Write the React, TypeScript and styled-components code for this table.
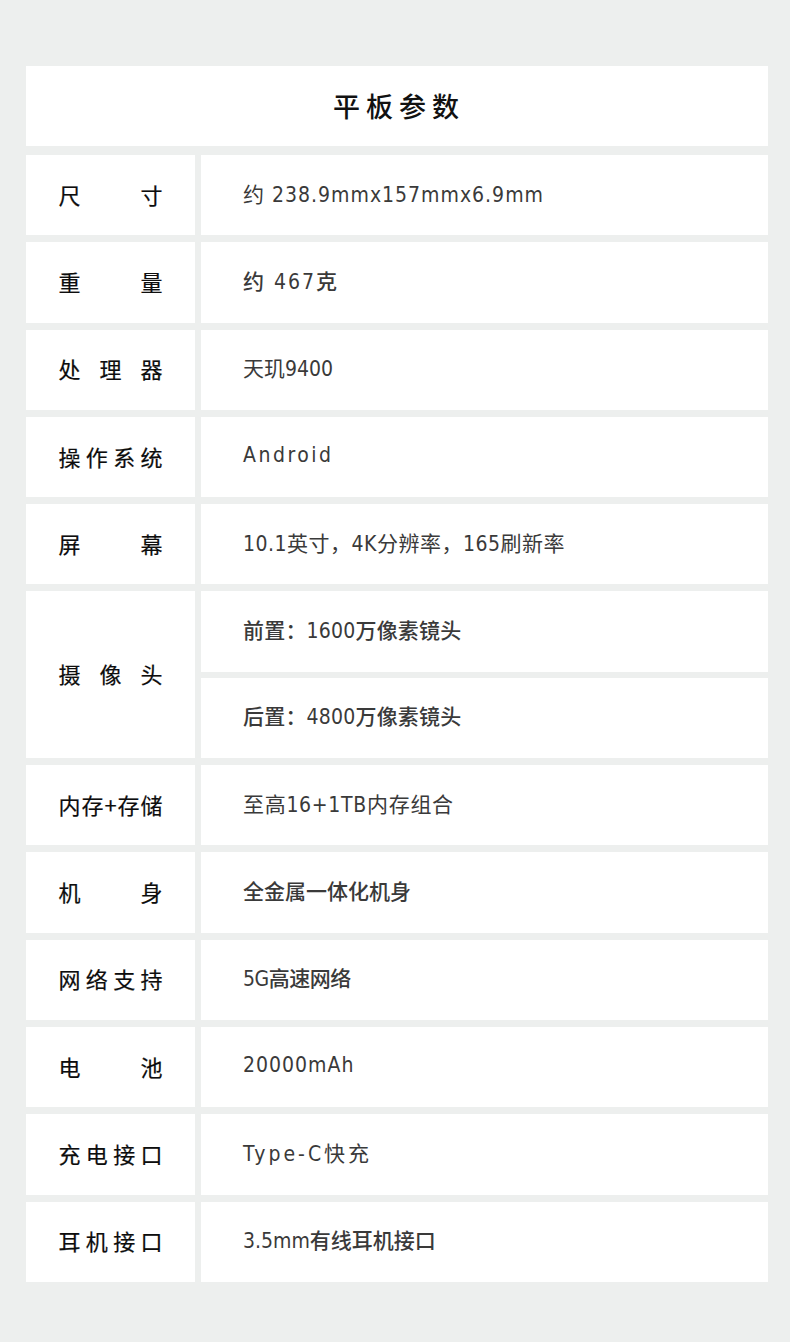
import React from 'react';
import styled, { createGlobalStyle } from 'styled-components';

const GlobalStyle = createGlobalStyle`
  html, body {
    margin: 0;
    padding: 0;
    background: #edefee;
  }
  body {
    font-family: "Noto Sans CJK SC", "Noto Sans", sans-serif;
  }
  * {
    box-sizing: border-box;
  }
`;

const Page = styled.div`
  width: 790px;
  min-height: 1342px;
  padding: 66px 22px 0 26px;
  background: #edefee;
`;

const Title = styled.header`
  height: 80px;
  background: #ffffff;
  display: flex;
  justify-content: center;
  align-items: center;
  font-size: 27px;
  font-weight: 500;
  letter-spacing: 6px;
  color: #111111;
  margin-bottom: 9px;
  padding: 0 0 2px 4px;
`;

const Table = styled.div`
  display: flex;
  flex-direction: column;
  gap: 7px;
`;

const Row = styled.div`
  display: grid;
  grid-template-columns: 169px 1fr;
  column-gap: 6px;
`;

const LabelCell = styled.div`
  background: #ffffff;
  display: flex;
  align-items: center;
  justify-content: center;
  padding-bottom: 3px;
`;

const LabelText = styled.span`
  width: 104px;
  font-size: 22px;
  font-weight: 400;
  color: #0d0d0d;
  text-align: justify;
  text-align-last: justify;
  line-height: 1;
  -webkit-text-stroke: 0.2px #0d0d0d;
`;

const ValueColumn = styled.div`
  display: flex;
  flex-direction: column;
  gap: 6px;
`;

interface ValueProps {
  $weight?: number;
  $spacing?: number;
}

const ValueCell = styled.div<ValueProps>`
  height: 80.3px;
  background: #ffffff;
  display: flex;
  align-items: center;
  padding: 0 0 5px 42px;
  font-family: "DejaVu Sans Condensed", "Liberation Sans Narrow", "Noto Sans CJK SC", sans-serif;
  font-stretch: condensed;
  font-size: 21px;
  font-weight: ${({ $weight }) => $weight ?? 400};
  letter-spacing: ${({ $spacing }) => $spacing ?? 1}px;
  color: #3a3a3a;
`;

interface Spec {
  label: string;
  values: { text: string; weight?: number; spacing?: number }[];
}

const specs: Spec[] = [
  { label: '尺寸', values: [{ text: '约 238.9mmx157mmx6.9mm', spacing: 1 }] },
  { label: '重量', values: [{ text: '约 467克', weight: 500, spacing: 2 }] },
  { label: '处理器', values: [{ text: '天玑9400', spacing: 0 }] },
  { label: '操作系统', values: [{ text: 'Android', spacing: 2.5 }] },
  { label: '屏幕', values: [{ text: '10.1英寸，4K分辨率，165刷新率', spacing: 0.5 }] },
  {
    label: '摄像头',
    values: [
      { text: '前置：1600万像素镜头', weight: 500, spacing: 0.2 },
      { text: '后置：4800万像素镜头', weight: 500, spacing: 0.2 },
    ],
  },
  { label: '内存+存储', values: [{ text: '至高16+1TB内存组合', spacing: 0.7 }] },
  { label: '机身', values: [{ text: '全金属一体化机身', weight: 500, spacing: 0 }] },
  { label: '网络支持', values: [{ text: '5G高速网络', weight: 500, spacing: -0.5 }] },
  { label: '电池', values: [{ text: '20000mAh', spacing: 1 }] },
  { label: '充电接口', values: [{ text: 'Type-C快充', spacing: 3 }] },
  { label: '耳机接口', values: [{ text: '3.5mm有线耳机接口', weight: 500, spacing: 0 }] },
];

export default function App() {
  return (
    <>
      <GlobalStyle />
      <Page>
        <Title>平板参数</Title>
        <Table>
          {specs.map((spec) => (
            <Row key={spec.label}>
              <LabelCell>
                <LabelText>{spec.label}</LabelText>
              </LabelCell>
              <ValueColumn>
                {spec.values.map((v) => (
                  <ValueCell key={v.text} $weight={v.weight} $spacing={v.spacing}>
                    {v.text}
                  </ValueCell>
                ))}
              </ValueColumn>
            </Row>
          ))}
        </Table>
      </Page>
    </>
  );
}
